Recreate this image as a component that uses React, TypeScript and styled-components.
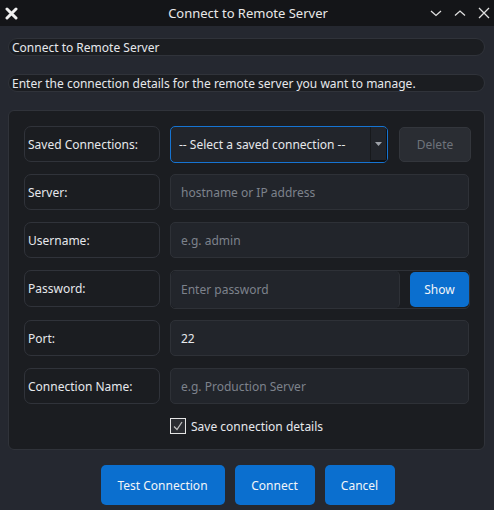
import React, { useState } from 'react'
import styled, { createGlobalStyle } from 'styled-components'

const Global = createGlobalStyle`
  html, body {
    margin: 0;
    padding: 0;
    background: #252830;
    font-family: "Noto Sans", "Open Sans", sans-serif;
    color: #e6e8ec;
  }
`

const Window = styled.div`
  width: 494px;
  height: 510px;
  display: flex;
  flex-direction: column;
  background: #252830;
  overflow: hidden;
`

const TitleBar = styled.div`
  height: 26px;
  background: #141518;
  display: grid;
  grid-template-columns: 1fr auto 1fr;
  align-items: center;
  padding: 0 3px 0 5px;
`

const TitleText = styled.div`
  text-align: center;
  font-size: 13px;
  color: #e8e8e8;
`

const TitleButtons = styled.div`
  display: flex;
  gap: 10px;
  align-items: center;
  justify-content: flex-end;
`

const Content = styled.div`
  display: flex;
  flex-direction: column;
  padding: 12px 9px 0 8px;
`

const InfoLabel = styled.div<{ $gap: number }>`
  height: 18px;
  border: 1px solid #30333a;
  border-radius: 9px;
  background: #1b1d21;
  font-size: 12px;
  line-height: 17px;
  padding-left: 3px;
  box-sizing: border-box;
  margin-bottom: ${(p) => p.$gap}px;
  white-space: nowrap;
`

const Group = styled.div`
  background: #1b1d21;
  border: 1px solid #30333a;
  border-radius: 6px;
  padding: 15px;
  display: flex;
  flex-direction: column;
  gap: 12px;
`

const Row = styled.div<{ $h?: number }>`
  display: grid;
  grid-template-columns: 136px 1fr;
  column-gap: 10px;
  height: ${(p) => p.$h ?? 36}px;
`

const FieldLabel = styled.div<{ $h?: number }>`
  border: 1px solid #30333a;
  border-radius: 7px;
  height: ${(p) => p.$h ?? 36}px;
  box-sizing: border-box;
  display: flex;
  align-items: center;
  padding-left: 3px;
  font-size: 12px;
  color: #e6e8ec;
  white-space: nowrap;
`

const Input = styled.div<{ $placeholder?: boolean }>`
  background: #22252b;
  border: 1px solid #2e3137;
  border-radius: 5px;
  height: 36px;
  box-sizing: border-box;
  display: flex;
  align-items: center;
  padding-left: 10px;
  font-size: 12px;
  color: ${(p) => (p.$placeholder ? '#7d828b' : '#e6e8ec')};
`

const SelectLine = styled.div`
  display: flex;
  gap: 11px;
  align-items: center;
`

const Select = styled.div`
  width: 218px;
  height: 37px;
  box-sizing: border-box;
  border: 1px solid #1674d2;
  border-radius: 5px;
  background: #22252b;
  display: flex;
  align-items: stretch;
  font-size: 12px;
  color: #e6e8ec;
  overflow: hidden;
`

const SelectText = styled.div`
  flex: 1;
  display: flex;
  align-items: center;
  padding-left: 8px;
`

const SelectArrow = styled.div`
  width: 15px;
  border-left: 1px solid #17191c;
  border-right: 1px solid #101113;
  border-bottom: 2px solid #101113;
  display: flex;
  align-items: center;
  justify-content: center;
`

const GhostButton = styled.div`
  width: 72px;
  height: 35px;
  box-sizing: border-box;
  border: 1px solid #33363c;
  border-radius: 5px;
  background: #2a2d33;
  color: #6e737b;
  font-size: 12px;
  display: flex;
  align-items: center;
  justify-content: center;
`

const PasswordFrame = styled.div`
  border: 1px solid #2e3137;
  border-radius: 5px;
  height: 39px;
  box-sizing: border-box;
  display: flex;
  align-items: center;
  gap: 10px;
`

const PasswordInput = styled(Input)`
  width: 229px;
  height: 37px;
  border: none;
  border-right: 1px solid #2e3137;
`

const BlueButton = styled.div<{ $w: number; $h: number }>`
  width: ${(p) => p.$w}px;
  height: ${(p) => p.$h}px;
  background: #0b6fcf;
  border-radius: 5px;
  color: #f2f5f8;
  font-size: 12px;
  display: flex;
  align-items: center;
  justify-content: center;
  cursor: pointer;
`

const CheckRow = styled.label`
  display: flex;
  align-items: center;
  gap: 5px;
  margin-left: 146px;
  margin-top: 2px;
  height: 16px;
  font-size: 12px;
  cursor: pointer;
`

const Footer = styled.div`
  display: flex;
  justify-content: center;
  gap: 10px;
  margin-top: 15px;
  margin-left: 2px;
`

const Glyph = ({ d }: { d: string }) => (
  <svg width="14" height="14" viewBox="0 0 14 14">
    <path d={d} stroke="#e0e0e0" strokeWidth="1.3" fill="none" />
  </svg>
)

const rows = [
  { label: 'Server:', value: 'hostname or IP address', placeholder: true },
  { label: 'Username:', value: 'e.g. admin', placeholder: true },
]

export default function App() {
  const [save, setSave] = useState(true)
  const [show, setShow] = useState(false)

  return (
    <Window>
      <Global />
      <TitleBar>
        <svg width="13" height="13" viewBox="0 0 13 13">
          <path d="M2 2 L11 11 M11 2 L2 11" stroke="#f0f0f0" strokeWidth="3" strokeLinecap="round" />
        </svg>
        <TitleText>Connect to Remote Server</TitleText>
        <TitleButtons>
          <Glyph d="M2 5 L7 9.5 L12 5" />
          <Glyph d="M2 9.5 L7 5 L12 9.5" />
          <Glyph d="M2 2 L12 12 M12 2 L2 12" />
        </TitleButtons>
      </TitleBar>

      <Content>
        <InfoLabel $gap={18}>Connect to Remote Server</InfoLabel>
        <InfoLabel $gap={18}>Enter the connection details for the remote server you want to manage.</InfoLabel>

        <Group>
          <Row>
            <FieldLabel>Saved Connections:</FieldLabel>
            <SelectLine>
              <Select>
                <SelectText>-- Select a saved connection --</SelectText>
                <SelectArrow>
                  <svg width="7" height="4" viewBox="0 0 7 4">
                    <path d="M0 0 H7 L3.5 4 Z" fill="#9da1a8" />
                  </svg>
                </SelectArrow>
              </Select>
              <GhostButton>Delete</GhostButton>
            </SelectLine>
          </Row>

          {rows.map((r) => (
            <Row key={r.label}>
              <FieldLabel>{r.label}</FieldLabel>
              <Input $placeholder={r.placeholder}>{r.value}</Input>
            </Row>
          ))}

          <Row $h={38}>
            <FieldLabel $h={37}>Password:</FieldLabel>
            <PasswordFrame>
              <PasswordInput $placeholder>Enter password</PasswordInput>
              <BlueButton $w={59} $h={35} onClick={() => setShow(!show)}>
                {show ? 'Hide' : 'Show'}
              </BlueButton>
            </PasswordFrame>
          </Row>

          <Row>
            <FieldLabel>Port:</FieldLabel>
            <Input>22</Input>
          </Row>

          <Row>
            <FieldLabel>Connection Name:</FieldLabel>
            <Input $placeholder>e.g. Production Server</Input>
          </Row>

          <CheckRow onClick={() => setSave(!save)}>
            <svg width="16" height="16" viewBox="0 0 16 16">
              <rect x="0.5" y="0.5" width="15" height="15" fill="#2a2c31" stroke="#e4e4e4" />
              {save && <path d="M4 8.5 L7 11.5 L12 4" stroke="#bdbdbd" strokeWidth="1.3" fill="none" />}
            </svg>
            Save connection details
          </CheckRow>
        </Group>

        <Footer>
          <BlueButton $w={124} $h={40}>Test Connection</BlueButton>
          <BlueButton $w={80} $h={40}>Connect</BlueButton>
          <BlueButton $w={70} $h={40}>Cancel</BlueButton>
        </Footer>
      </Content>
    </Window>
  )
}
